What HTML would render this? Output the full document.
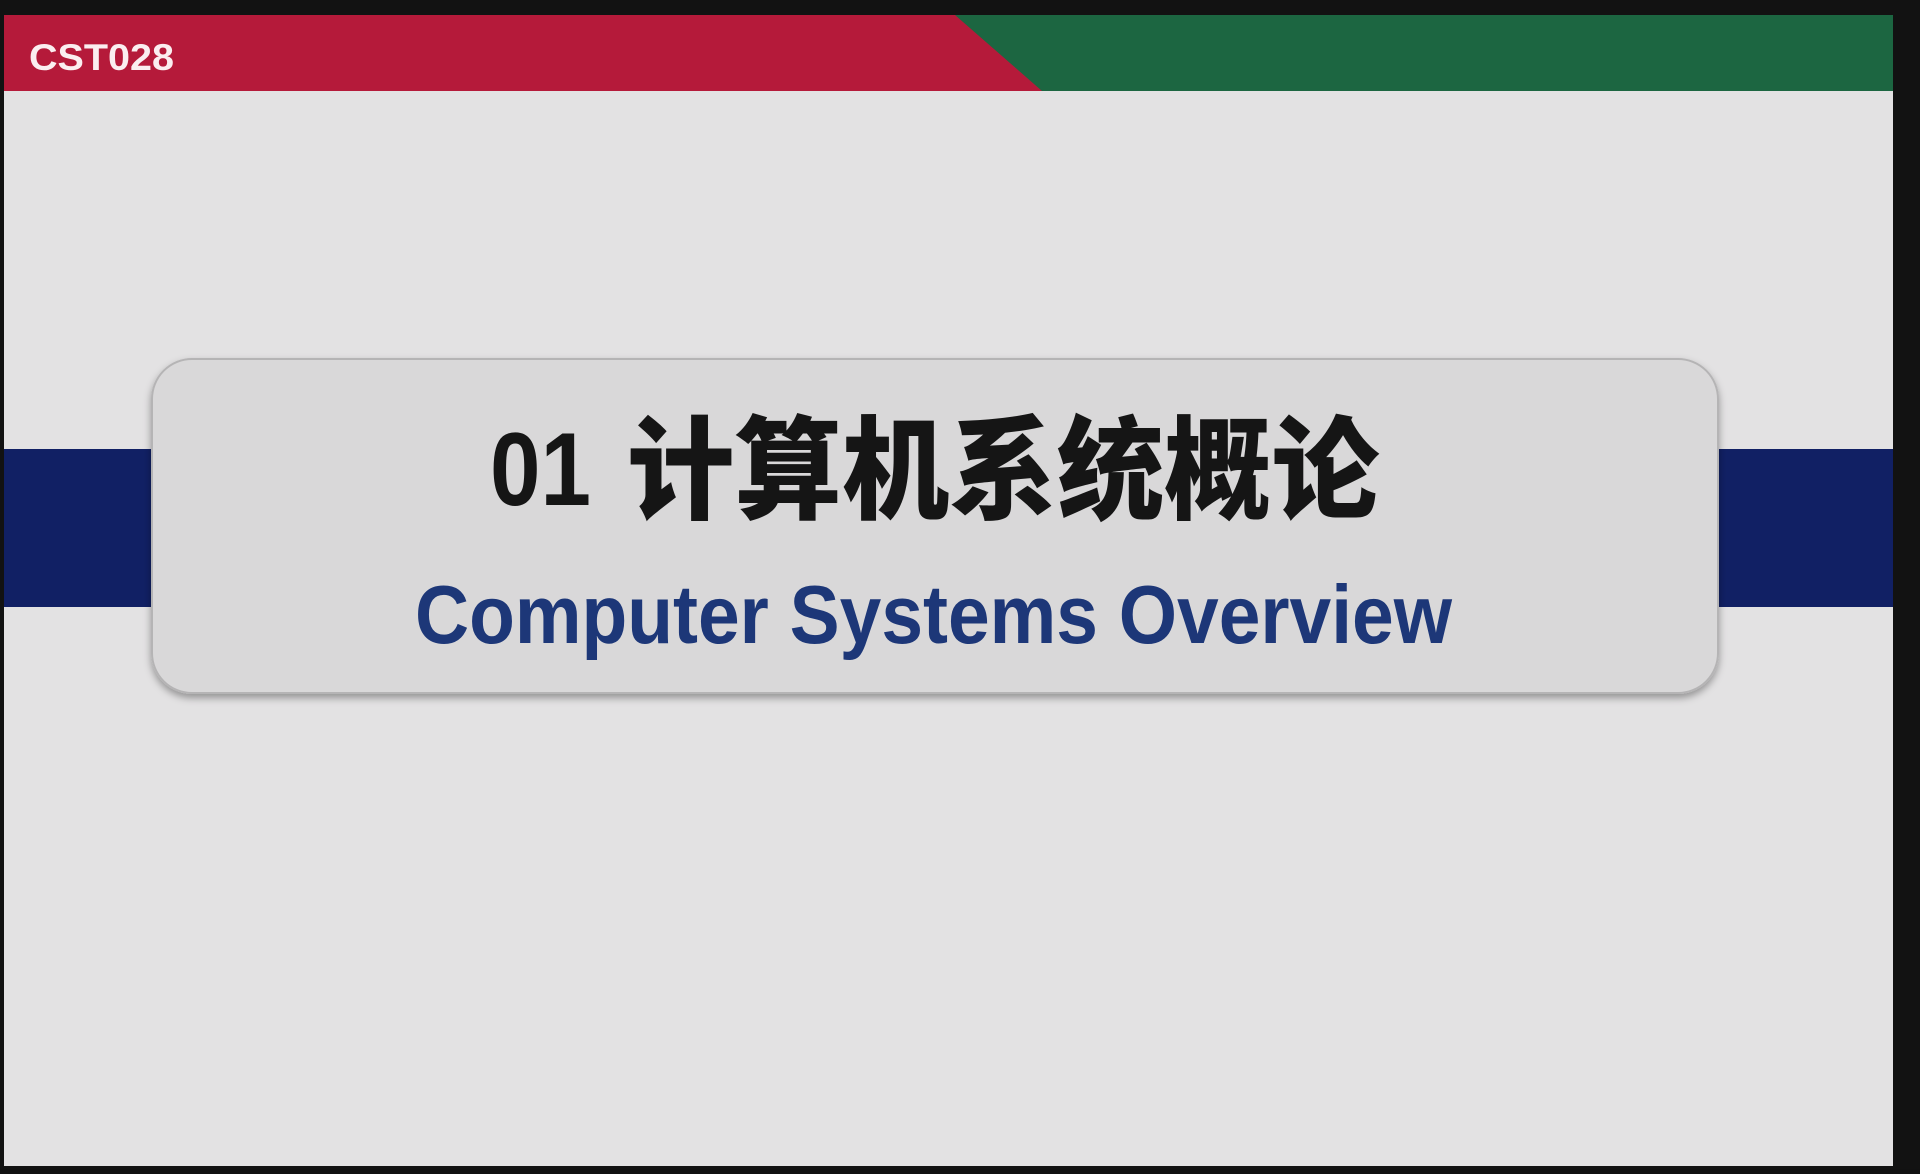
<!DOCTYPE html>
<html><head><meta charset="utf-8"><style>
html,body{margin:0;padding:0;width:1920px;height:1169px;overflow:hidden;background:#111;}
.s{position:absolute;left:0;top:0;width:1920px;height:1169px;}
</style></head><body>
<div class="s">
<svg width="1920" height="1169" viewBox="0 0 1920 1169" xmlns="http://www.w3.org/2000/svg">
<defs>
<filter id="sh" x="-5%" y="-20%" width="110%" height="140%">
<feDropShadow dx="0" dy="4" stdDeviation="4" flood-color="#000" flood-opacity="0.35"/>
</filter>
</defs>
<rect x="0" y="0" width="1920" height="1169" fill="#121212"/>
<rect x="4" y="90" width="1889" height="1076" fill="#e3e2e3"/>
<rect x="4" y="15" width="1889" height="76" fill="#1c6641"/>
<polygon points="4,15 955,15 1042,91 4,91" fill="#b51a3a"/>
<text x="29" y="70" font-family="Liberation Sans, sans-serif" font-weight="bold" font-size="37" fill="#fbeef0" textLength="145" lengthAdjust="spacingAndGlyphs">CST028</text>
<rect x="4" y="449" width="1889" height="158" fill="#112064"/>
<rect x="152" y="359" width="1566" height="334" rx="40" fill="#d9d8d9" stroke="#b5b4b5" stroke-width="2" filter="url(#sh)"/>
<text x="490" y="505" font-family="Liberation Sans, sans-serif" font-weight="bold" font-size="104" fill="#151515" textLength="101" lengthAdjust="spacingAndGlyphs">01</text>
<text x="627" y="510" font-family="Noto Sans CJK SC, WenQuanYi Zen Hei, sans-serif" font-weight="900" font-size="112" fill="#151515" textLength="752" lengthAdjust="spacingAndGlyphs">计算机系统概论</text>
<text x="415" y="643" font-family="Liberation Sans, sans-serif" font-weight="bold" font-size="83" fill="#1d3778" textLength="1037" lengthAdjust="spacingAndGlyphs">Computer Systems Overview</text>
</svg>
</div>
</body></html>
